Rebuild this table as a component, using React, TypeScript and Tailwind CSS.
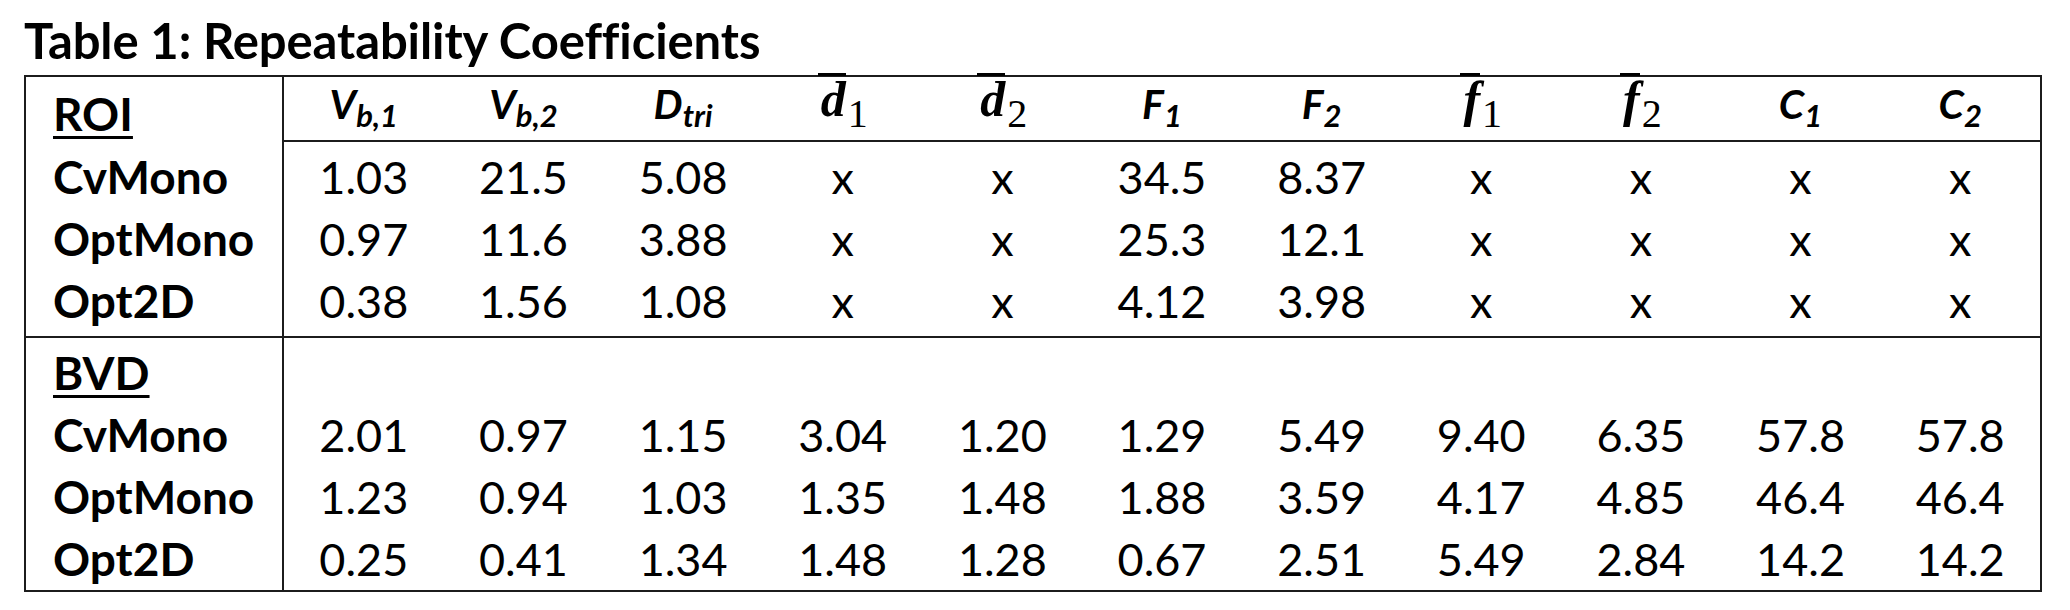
import React from "react";

type Row = { label: string; values: string[] };

const roiRows: Row[] = [
  { label: "CvMono", values: ["1.03", "21.5", "5.08", "x", "x", "34.5", "8.37", "x", "x", "x", "x"] },
  { label: "OptMono", values: ["0.97", "11.6", "3.88", "x", "x", "25.3", "12.1", "x", "x", "x", "x"] },
  { label: "Opt2D", values: ["0.38", "1.56", "1.08", "x", "x", "4.12", "3.98", "x", "x", "x", "x"] },
];

const bvdRows: Row[] = [
  { label: "CvMono", values: ["2.01", "0.97", "1.15", "3.04", "1.20", "1.29", "5.49", "9.40", "6.35", "57.8", "57.8"] },
  { label: "OptMono", values: ["1.23", "0.94", "1.03", "1.35", "1.48", "1.88", "3.59", "4.17", "4.85", "46.4", "46.4"] },
  { label: "Opt2D", values: ["0.25", "0.41", "1.34", "1.48", "1.28", "0.67", "2.51", "5.49", "2.84", "14.2", "14.2"] },
];

const grid = "grid grid-cols-[258px_repeat(11,minmax(0,1fr))] grid-rows-[100%]";

function Sym({ base, sub }: { base: string; sub: string }) {
  return (
    <span className="font-bold italic text-[41px] leading-none whitespace-nowrap">
      {base}
      <span className="text-[31px] relative top-[8px]">{sub}</span>
    </span>
  );
}

function Bar({ base, sub }: { base: string; sub: string }) {
  return (
    <span className="font-['Liberation_Serif','DejaVu_Serif',serif] text-[50px] leading-none whitespace-nowrap">
      <span className="inline-block font-bold italic leading-[0.95] border-t-[3px] border-black pl-[3px]">{base}</span>
      <span className="text-[40px] relative top-[11px] ml-[2px]">{sub}</span>
    </span>
  );
}

function DataRow({ row, pad = "" }: { row: Row; pad?: string }) {
  return (
    <div className={`${grid} h-[62px] ${pad === "top" ? "h-[66px]" : ""} ${pad === "bottom" ? "h-[66px]" : ""}`}>
      <div
        className={`border-r-2 border-[#1c1c1c] h-full flex items-center pl-[27px] font-bold text-[46px] ${pad === "top" ? "pt-[4px]" : ""} ${pad === "bottom" ? "pb-[4px]" : ""}`}
      >
        {row.label}
      </div>
      {row.values.map((v, i) => (
        <div
          key={i}
          className={`h-full flex items-center justify-center ${pad === "top" ? "pt-[4px]" : ""} ${pad === "bottom" ? "pb-[4px]" : ""}`}
        >
          {v}
        </div>
      ))}
    </div>
  );
}

export default function App() {
  const headers = [
    <Sym base="V" sub="b,1" />,
    <Sym base="V" sub="b,2" />,
    <Sym base="D" sub="tri" />,
    <Bar base="d" sub="1" />,
    <Bar base="d" sub="2" />,
    <Sym base="F" sub="1" />,
    <Sym base="F" sub="2" />,
    <Bar base="f" sub="1" />,
    <Bar base="f" sub="2" />,
    <Sym base="C" sub="1" />,
    <Sym base="C" sub="2" />,
  ];

  return (
    <div className="w-[2070px] h-[610px] bg-white text-black font-['Lato','Noto_Sans',sans-serif] pl-[24px] pt-[12px]">
      <h1 className="font-bold text-[49px] leading-[56px] h-[63px] tracking-[-0.1px]">Table 1: Repeatability Coefficients</h1>
      <div className="w-[2018px] border-2 border-[#1c1c1c] text-[45px] leading-none">
        <div className={`${grid} h-[65px]`}>
          <div className="border-r-2 border-[#1c1c1c] pl-[27px] pt-[14px] font-bold text-[46px]">
            <span className="underline decoration-[3px] underline-offset-[5px]">ROI</span>
          </div>
          {headers.map((h, i) => (
            <div key={i} className="border-b-2 border-[#1c1c1c] flex items-end justify-center pb-[16px]">
              {h}
            </div>
          ))}
        </div>
        {roiRows.map((r, i) => (
          <DataRow key={r.label} row={r} pad={i === 0 ? "top" : i === roiRows.length - 1 ? "bottom" : ""} />
        ))}
        <div className="border-t-2 border-[#1c1c1c]">
          <div className={`${grid} h-[66px]`}>
            <div className="border-r-2 border-[#1c1c1c] pl-[27px] pt-[12px] font-bold text-[46px]">
              <span className="underline decoration-[3px] underline-offset-[5px]">BVD</span>
            </div>
          </div>
          {bvdRows.map((r) => (
            <DataRow key={r.label} row={r} />
          ))}
        </div>
      </div>
    </div>
  );
}
